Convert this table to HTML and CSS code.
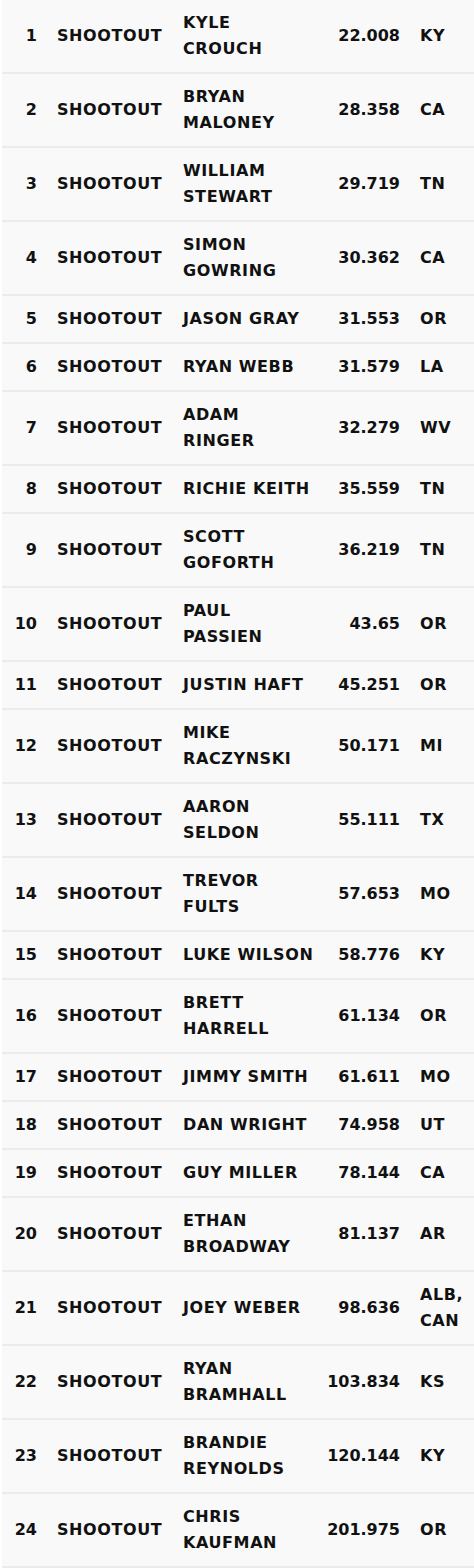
FILE: index.html
```html
<!DOCTYPE html>
<html lang="en">
<head>
<meta charset="utf-8">
<title>Shootout Results</title>
<link rel="stylesheet" href="styles.css">
</head>
<body>
<table class="results">
  <colgroup>
    <col class="c-rank"><col class="c-cat"><col class="c-name"><col class="c-time"><col class="c-state">
  </colgroup>
  <tbody>
    <tr><td class="rank">1</td><td class="cat">SHOOTOUT</td><td class="name">KYLE<br>CROUCH</td><td class="time">22.008</td><td class="state">KY</td></tr>
    <tr><td class="rank">2</td><td class="cat">SHOOTOUT</td><td class="name">BRYAN<br>MALONEY</td><td class="time">28.358</td><td class="state">CA</td></tr>
    <tr><td class="rank">3</td><td class="cat">SHOOTOUT</td><td class="name">WILLIAM<br>STEWART</td><td class="time">29.719</td><td class="state">TN</td></tr>
    <tr><td class="rank">4</td><td class="cat">SHOOTOUT</td><td class="name">SIMON<br>GOWRING</td><td class="time">30.362</td><td class="state">CA</td></tr>
    <tr><td class="rank">5</td><td class="cat">SHOOTOUT</td><td class="name">JASON GRAY</td><td class="time">31.553</td><td class="state">OR</td></tr>
    <tr><td class="rank">6</td><td class="cat">SHOOTOUT</td><td class="name">RYAN WEBB</td><td class="time">31.579</td><td class="state">LA</td></tr>
    <tr><td class="rank">7</td><td class="cat">SHOOTOUT</td><td class="name">ADAM<br>RINGER</td><td class="time">32.279</td><td class="state">WV</td></tr>
    <tr><td class="rank">8</td><td class="cat">SHOOTOUT</td><td class="name">RICHIE KEITH</td><td class="time">35.559</td><td class="state">TN</td></tr>
    <tr><td class="rank">9</td><td class="cat">SHOOTOUT</td><td class="name">SCOTT<br>GOFORTH</td><td class="time">36.219</td><td class="state">TN</td></tr>
    <tr><td class="rank">10</td><td class="cat">SHOOTOUT</td><td class="name">PAUL<br>PASSIEN</td><td class="time">43.65</td><td class="state">OR</td></tr>
    <tr><td class="rank">11</td><td class="cat">SHOOTOUT</td><td class="name">JUSTIN HAFT</td><td class="time">45.251</td><td class="state">OR</td></tr>
    <tr><td class="rank">12</td><td class="cat">SHOOTOUT</td><td class="name">MIKE<br>RACZYNSKI</td><td class="time">50.171</td><td class="state">MI</td></tr>
    <tr><td class="rank">13</td><td class="cat">SHOOTOUT</td><td class="name">AARON<br>SELDON</td><td class="time">55.111</td><td class="state">TX</td></tr>
    <tr><td class="rank">14</td><td class="cat">SHOOTOUT</td><td class="name">TREVOR<br>FULTS</td><td class="time">57.653</td><td class="state">MO</td></tr>
    <tr><td class="rank">15</td><td class="cat">SHOOTOUT</td><td class="name">LUKE WILSON</td><td class="time">58.776</td><td class="state">KY</td></tr>
    <tr><td class="rank">16</td><td class="cat">SHOOTOUT</td><td class="name">BRETT<br>HARRELL</td><td class="time">61.134</td><td class="state">OR</td></tr>
    <tr><td class="rank">17</td><td class="cat">SHOOTOUT</td><td class="name">JIMMY SMITH</td><td class="time">61.611</td><td class="state">MO</td></tr>
    <tr><td class="rank">18</td><td class="cat">SHOOTOUT</td><td class="name">DAN WRIGHT</td><td class="time">74.958</td><td class="state">UT</td></tr>
    <tr><td class="rank">19</td><td class="cat">SHOOTOUT</td><td class="name">GUY MILLER</td><td class="time">78.144</td><td class="state">CA</td></tr>
    <tr><td class="rank">20</td><td class="cat">SHOOTOUT</td><td class="name">ETHAN<br>BROADWAY</td><td class="time">81.137</td><td class="state">AR</td></tr>
    <tr><td class="rank">21</td><td class="cat">SHOOTOUT</td><td class="name">JOEY WEBER</td><td class="time">98.636</td><td class="state">ALB,<br>CAN</td></tr>
    <tr><td class="rank">22</td><td class="cat">SHOOTOUT</td><td class="name">RYAN<br>BRAMHALL</td><td class="time">103.834</td><td class="state">KS</td></tr>
    <tr><td class="rank">23</td><td class="cat">SHOOTOUT</td><td class="name">BRANDIE<br>REYNOLDS</td><td class="time">120.144</td><td class="state">KY</td></tr>
    <tr><td class="rank">24</td><td class="cat">SHOOTOUT</td><td class="name">CHRIS<br>KAUFMAN</td><td class="time">201.975</td><td class="state">OR</td></tr>
  </tbody>
</table>
</body>
</html>
```
FILE: styles.css
```css
html, body {
  margin: 0;
  padding: 0;
  background: #ffffff;
}

.results {
  margin-left: 2px;
  width: 472px;
  border-collapse: collapse;
  table-layout: fixed;
  font-family: "DejaVu Sans", "Liberation Sans", sans-serif;
  font-weight: bold;
  font-size: 16px;
  line-height: 26px;
  color: #111111;
}

.c-rank { width: 45px; }
.c-cat { width: 126px; }
.c-name { width: 143px; }
.c-time { width: 94px; }
.c-state { width: 64px; }

.results tr {
  background: #f9f9f9;
  border-bottom: 2px solid #ebebeb;
}

.results td {
  padding: 10px;
  vertical-align: middle;
  white-space: nowrap;
}

.results .cat,
.results .name,
.results .state {
  letter-spacing: 0.6px;
}

.results .rank,
.results .time {
  text-align: right;
}
```
